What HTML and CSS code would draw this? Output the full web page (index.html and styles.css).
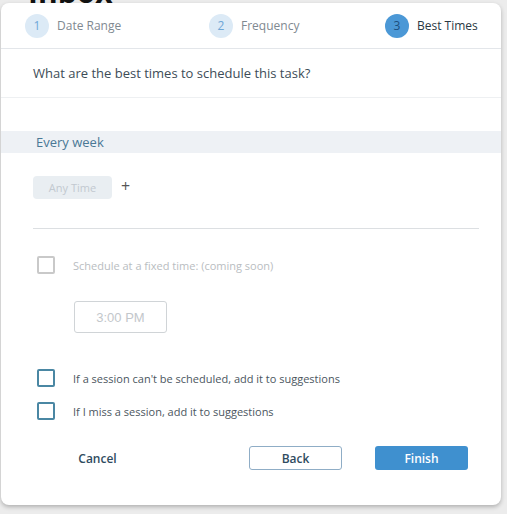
FILE: index.html
```html
<!DOCTYPE html>
<html lang="en">
<head>
  <meta charset="UTF-8">
  <meta name="viewport" content="width=device-width, initial-scale=1.0">
  <title>Best Times</title>
  <link rel="stylesheet" href="styles.css">
</head>
<body>
  <div class="page-title"><span>Inbox</span></div>

  <div class="card">
    <!-- kroki kreatora -->
    <div class="steps">
      <div class="step"><span class="step-num">1</span><span class="step-label">Date Range</span></div>
      <div class="step"><span class="step-num">2</span><span class="step-label">Frequency</span></div>
      <div class="step active"><span class="step-num">3</span><span class="step-label">Best Times</span></div>
    </div>

    <div class="question">What are the best times to schedule this task?</div>

    <div class="band">Every week</div>

    <div class="content">
      <div class="times-row">
        <span class="time-pill">Any Time</span>
        <span class="plus">+</span>
      </div>

      <div class="divider"></div>

      <label class="check-row disabled">
        <span class="box"></span>
        <span>Schedule at a fixed time: (coming soon)</span>
      </label>

      <div class="time-input">3:00 PM</div>

      <label class="check-row first-opt">
        <span class="box"></span>
        <span>If a session can't be scheduled, add it to suggestions</span>
      </label>
      <label class="check-row second-opt">
        <span class="box"></span>
        <span>If I miss a session, add it to suggestions</span>
      </label>
    </div>

    <div class="footer">
      <button class="btn btn-link">Cancel</button>
      <button class="btn btn-outline">Back</button>
      <button class="btn btn-primary">Finish</button>
    </div>
  </div>
</body>
</html>
```

FILE: styles.css
```css
body {
  margin: 0;
  background-color: #ececec;
  font-family: "Open Sans", "Noto Sans", sans-serif;
  color: #3b4a55;
}
.page-title {
  height: 3px;
  overflow: hidden;
  display: flex;
  align-items: flex-end;
  padding-left: 28px;
}
.page-title span {
  font-size: 30px;
  font-weight: 700;
  color: #111;
  line-height: 22px;
}
.card {
  margin: 0 6px 9px 1px;
  background: white;
  border-radius: 8px;
  box-shadow: 0 2px 4px rgba(0, 0, 0, 0.25);
  padding-bottom: 35px;
}
.steps {
  height: 45px;
  border-bottom: 1px solid #e3e6ea;
  display: grid;
  grid-template-columns: 184px 176px auto;
  align-items: center;
  padding-left: 24px;
}
.step {
  display: flex;
  align-items: center;
  gap: 8px;
}
.step-num {
  width: 24px;
  height: 24px;
  border-radius: 50%;
  background-color: #dceaf6;
  color: #6ea6d6;
  font-size: 12px;
  display: flex;
  align-items: center;
  justify-content: center;
}
.step-label {
  font-size: 12px;
  color: #7f8991;
}
.step.active .step-num {
  background-color: #4b98d6;
  color: #1d4f7e;
}
.step.active .step-label {
  color: #2a3843;
}
.question {
  height: 48px;
  display: flex;
  align-items: center;
  padding-left: 32px;
  font-size: 13px;
  color: #3d4c57;
  border-bottom: 1px solid #eef0f2;
}
.band {
  margin-top: 33px;
  height: 22px;
  display: flex;
  align-items: center;
  padding-left: 35px;
  background-color: #eef1f5;
  font-size: 13px;
  color: #4a7895;
}
.content {
  padding: 0 22px 0 32px;
}
.times-row {
  margin-top: 23px;
  display: flex;
  align-items: center;
  gap: 9px;
}
.time-pill {
  width: 79px;
  height: 23px;
  border-radius: 4px;
  background-color: #e9eef2;
  color: #c2c9d0;
  font-size: 11px;
  display: flex;
  align-items: center;
  justify-content: center;
}
.plus {
  font-size: 16px;
  color: #555;
  line-height: 16px;
  margin-top: -3px;
}
.divider {
  margin-top: 29px;
  height: 1px;
  background-color: #dcdfe2;
}
.check-row {
  display: flex;
  align-items: center;
  gap: 18px;
  padding-left: 4px;
  font-size: 11px;
  color: #4b5660;
  height: 18px;
}
.check-row .box {
  width: 14px;
  height: 14px;
  border: 2px solid #4a87a3;
  border-radius: 2px;
}
.check-row.disabled {
  margin-top: 27px;
  color: #b9bdc1;
}
.check-row.disabled .box {
  border-color: #c9c9c9;
}
.time-input {
  margin: 27px 0 0 41px;
  width: 91px;
  height: 30px;
  border: 1px solid #d0d4d7;
  border-radius: 3px;
  display: flex;
  align-items: center;
  justify-content: center;
  font-family: "Liberation Sans", Arial, sans-serif;
  font-size: 13px;
  color: #c3c7cb;
}
.check-row.first-opt {
  margin-top: 36px;
}
.check-row.second-opt {
  margin-top: 15px;
}
.footer {
  margin-top: 26px;
  display: flex;
  padding-left: 50px;
}
.btn {
  width: 93px;
  height: 24px;
  font-family: inherit;
  font-size: 12px;
  font-weight: 600;
  border-radius: 3px;
  cursor: pointer;
}
.btn-link {
  border: none;
  background: transparent;
  color: #2f4b60;
}
.btn-outline {
  margin-left: 105px;
  border: 1px solid #8fadc6;
  background: white;
  color: #2f4b60;
}
.btn-primary {
  margin-left: 33px;
  border: none;
  background-color: #3f90cf;
  color: white;
}
```
